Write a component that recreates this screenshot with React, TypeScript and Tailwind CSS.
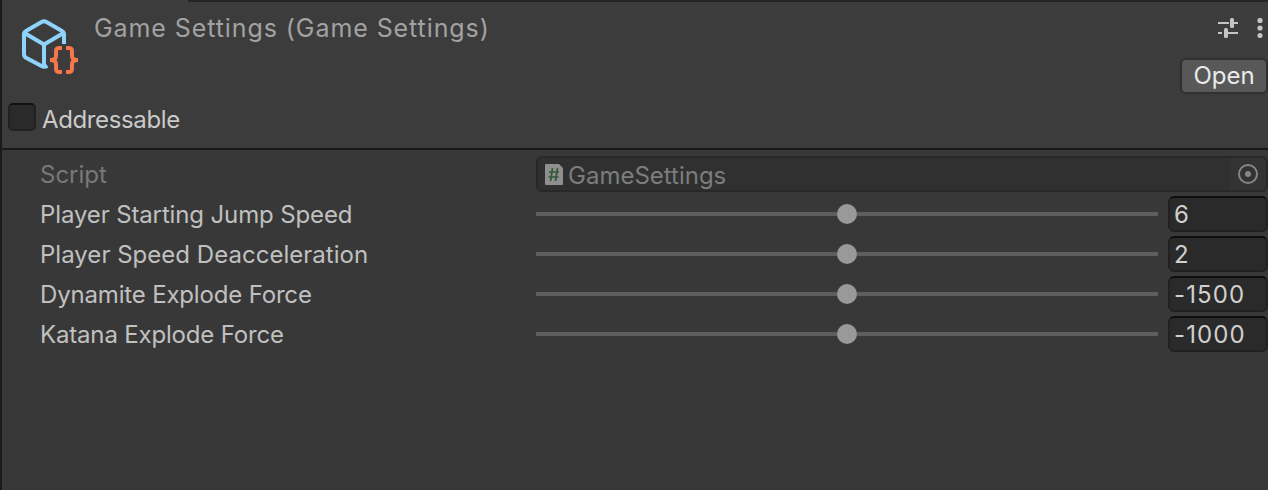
import React from "react";

const sliders = [
  { label: "Player Starting Jump Speed", value: "6", tracking: "tracking-[-0.13px]" },
  { label: "Player Speed Deacceleration", value: "2", tracking: "tracking-[0.02px]" },
  { label: "Dynamite Explode Force", value: "-1500", tracking: "tracking-[-0.17px]" },
  { label: "Katana Explode Force", value: "-1000", tracking: "tracking-[-0.17px]" },
];

function AssetIcon() {
  return (
    <svg className="h-[60px] w-[60px] shrink-0" viewBox="20 16 60 60" fill="none">
      <g stroke="#8fd3fb" strokeWidth="4" strokeLinejoin="round">
        <path d="M64 44V34.5Q64 32 62 31L46.500 22Q44 20.500 41.500 22L26 31Q24 32 24 34.500V54Q24 56.500 26 57.700L41.500 66Q44 67.500 47.500 66" />
        <path d="M24.500 33L44 44.500L63.500 33M44 44.500V67" />
      </g>
      <g stroke="#f4774a" strokeWidth="4">
        <path d="M62 48H59.500Q56 48 56 51V56Q56 60 50 60Q56 60 56 64V69Q56 72 59.500 72H62" />
        <path d="M66 48H68.500Q72 48 72 51V56Q72 60 78 60Q72 60 72 64V69Q72 72 68.500 72H66" />
      </g>
    </svg>
  );
}

function PresetIcon() {
  return (
    <svg className="h-5 w-5" viewBox="0 0 20 20" fill="#c4c4c4">
      <path d="M0 4h11v2H0zM16 4h4v2h-4zM0 14h4v2H0zM10 14h10v2H10z" />
      <rect x="12" y="0" width="4" height="10" rx="1.500" />
      <rect x="6" y="10" width="4" height="10" rx="1.500" />
    </svg>
  );
}

function MenuIcon() {
  return (
    <svg className="h-5 w-[6px]" viewBox="0 0 6 20" fill="#c4c4c4">
      <circle cx="3" cy="2.500" r="2.600" />
      <circle cx="3" cy="10" r="2.600" />
      <circle cx="3" cy="17.500" r="2.600" />
    </svg>
  );
}

function ScriptIcon() {
  return (
    <svg className="h-[21px] w-[18px] shrink-0" viewBox="0 0 18 21" fill="none">
      <path d="M1 0H14L18 4V20Q18 21 17 21H1Q0 21 0 20V1Q0 0 1 0Z" fill="#8f8f8f" />
      <path d="M7.500 4L5.500 17M12.500 4L10.500 17M4 8H14M3.500 13H13.500" stroke="#35573a" strokeWidth="1.700" />
    </svg>
  );
}

export default function App() {
  return (
    <div className="flex h-[490px] w-[1268px] flex-col overflow-hidden border-l-2 border-[#1b1b1b] bg-[#383838] font-['Inter',sans-serif] text-2xl leading-[36px] text-[#c0c0c0]">
      <header className="flex h-[150px] shrink-0 flex-col border-b-2 border-[#1a1a1a] bg-[#3c3c3c]">
        <div className="ml-[186px] h-[2px] shrink-0 bg-[#242424]" />
        <div className="flex h-[100px] shrink-0 justify-between pl-[18px]">
          <div className="flex pt-[14px]">
            <AssetIcon />
            <h1 className="-mt-[6px] ml-[14px] whitespace-nowrap text-[25px] leading-[36px] tracking-[0.92px] text-[#a2a2a2]">Game Settings (Game Settings)</h1>
          </div>
          <div className="flex flex-col items-end">
            <div className="flex gap-[19px] pt-4 pr-[5px]">
              <PresetIcon />
              <MenuIcon />
            </div>
            <button className="mt-5 flex h-9 w-[88px] items-center justify-center rounded-[6px] border-2 border-[#303030] bg-[#585858] text-[#eaeaea]">Open</button>
          </div>
        </div>
        <label className="flex pl-[6px]">
          <span className="mt-[1px] h-7 w-7 rounded-[5px] border-2 border-[#212121] border-t-[#111111] bg-[#2a2a2a]" />
          <span className="ml-[6px] tracking-[-0.37px] text-[#cacaca]">Addressable</span>
        </label>
      </header>
      <main className="flex flex-col gap-1 pt-[6px] pl-[38px]">
        <div className="flex h-9">
          <span className="w-[496px] shrink-0 pt-px text-[#797979]">Script</span>
          <div className="flex grow items-center overflow-hidden rounded-[6px] border-2 border-[#282828] bg-[#303030] pl-[7px]">
            <ScriptIcon />
            <span className="ml-[5px] pt-[3px] text-[#7d7d7d]">GameSettings</span>
            <span className="ml-auto flex h-full w-9 items-center justify-center bg-[#333333]">
              <svg className="h-5 w-5" viewBox="0 0 20 20" fill="none">
                <circle cx="10" cy="10" r="9" stroke="#858585" strokeWidth="2" />
                <circle cx="10" cy="10" r="3" fill="#858585" />
              </svg>
            </span>
          </div>
        </div>
        {sliders.map(({ label, value, tracking }) => (
          <div key={label} className="flex h-9">
            <span className={`w-[496px] shrink-0 pt-px whitespace-nowrap ${tracking}`}>{label}</span>
            <div className="flex w-[622px] items-center justify-center">
              <span className="h-1 grow bg-[#5e5e5e]" />
              <span className="h-5 w-5 rounded-full bg-[#999999]" />
              <span className="h-1 grow bg-[#5e5e5e]" />
            </div>
            <div className="ml-[10px] flex grow items-center rounded-[6px] border-2 border-[#212121] border-t-[#0e0e0e] bg-[#2a2a2a] pl-1 text-[#d0d0d0]">
              <span className="pt-[2px] tracking-[1.1px]">{value}</span>
            </div>
          </div>
        ))}
      </main>
    </div>
  );
}
